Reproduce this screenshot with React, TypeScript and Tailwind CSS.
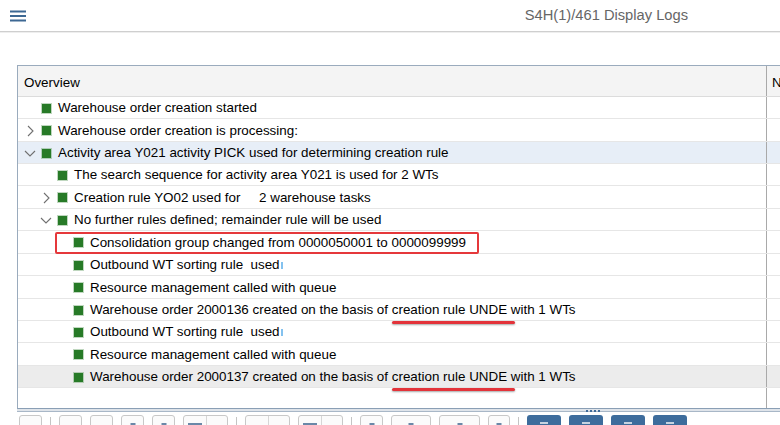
type Row = {
  level: number
  toggle?: 'open' | 'closed'
  text: string
  h: string
  bg?: string
  boxed?: boolean
  mark?: boolean
  underline?: [string, string, string]
}

const rows: Row[] = [
  { level: 0, text: 'Warehouse order creation started', h: 'h-[22px]' },
  { level: 0, toggle: 'closed', text: 'Warehouse order creation is processing:', h: 'h-[23px]' },
  {
    level: 0,
    toggle: 'open',
    text: 'Activity area Y021 activity PICK used for determining creation rule',
    h: 'h-[22px]',
    bg: 'bg-[#e7eef7]',
  },
  { level: 1, text: 'The search sequence for activity area Y021 is used for 2 WTs', h: 'h-[22px]' },
  { level: 1, toggle: 'closed', text: 'Creation rule YO02 used for     2 warehouse tasks', h: 'h-[23px]' },
  { level: 1, toggle: 'open', text: 'No further rules defined; remainder rule will be used', h: 'h-[22px]' },
  {
    level: 2,
    text: 'Consolidation group changed from 0000050001 to 0000099999',
    h: 'h-[23px]',
    boxed: true,
  },
  { level: 2, text: 'Outbound WT sorting rule  used', h: 'h-[22px]', mark: true },
  { level: 2, text: 'Resource management called with queue', h: 'h-[23px]' },
  {
    level: 2,
    text: '',
    h: 'h-[22px]',
    underline: ['Warehouse order 2000136 created on the basis of ', 'creation rule UNDE', ' with 1 WTs'],
  },
  { level: 2, text: 'Outbound WT sorting rule  used', h: 'h-[22px]', mark: true },
  { level: 2, text: 'Resource management called with queue', h: 'h-[23px]' },
  {
    level: 2,
    text: '',
    h: 'h-[22px]',
    bg: 'bg-[#ececec]',
    underline: ['Warehouse order 2000137 created on the basis of ', 'creation rule UNDE', ' with 1 WTs'],
  },
]

type Tool =
  | { kind: 'sep' }
  | { kind: 'btn'; w: string; split?: boolean; icon?: boolean }
  | { kind: 'blue' }

const tools: Tool[] = [
  { kind: 'btn', w: 'w-[23px]' },
  { kind: 'sep' },
  { kind: 'btn', w: 'w-[23px]' },
  { kind: 'btn', w: 'w-[23px]' },
  { kind: 'btn', w: 'w-[23px]', icon: true },
  { kind: 'btn', w: 'w-[23px]', icon: true },
  { kind: 'btn', w: 'w-[45px]', split: true, icon: true },
  { kind: 'sep' },
  { kind: 'btn', w: 'w-[45px]', split: true },
  { kind: 'btn', w: 'w-[45px]', split: true, icon: true },
  { kind: 'sep' },
  { kind: 'btn', w: 'w-[23px]', icon: true },
  { kind: 'btn', w: 'w-[40px]', icon: true },
  { kind: 'btn', w: 'w-[41px]', icon: true },
  { kind: 'btn', w: 'w-[22px]', icon: true },
  { kind: 'sep' },
  { kind: 'blue' },
  { kind: 'blue' },
  { kind: 'blue' },
  { kind: 'blue' },
]

function Toggle({ state }: { state?: 'open' | 'closed' }) {
  if (state === 'closed') {
    return (
      <svg width="7" height="12" viewBox="0 0 7 12">
        <polyline points="1,1 6,6 1,11" fill="none" stroke="#707070" strokeWidth="1.1" />
      </svg>
    )
  }
  if (state === 'open') {
    return (
      <svg width="12" height="7" viewBox="0 0 12 7">
        <polyline points="1,1 6,6 11,1" fill="none" stroke="#707070" strokeWidth="1.1" />
      </svg>
    )
  }
  return null
}

function LogRow({ row }: { row: Row }) {
  return (
    <div className={`flex ${row.h} ${row.bg ?? 'bg-white'} border-b border-[#e6e6e6]`}>
      <div className="relative flex w-[749px] shrink-0 items-center border-r border-[#a9a9a9]">
        {row.level > 0 && <div className={row.level === 1 ? 'w-[16px]' : 'w-[32px]'} />}
        <div className="flex w-[24px] items-center justify-center pt-[1px]">
          <Toggle state={row.toggle} />
        </div>
        <div className="mt-[1px] h-[9px] w-[9px] bg-[#277a27] ring-1 ring-[#5e9c5e]/40" />
        <span className="ml-[7px] whitespace-pre pt-[2px] text-[13.4px] text-black">
          {row.underline ? (
            <>
              {row.underline[0]}
              <span className="relative inline-block">
                {row.underline[1]}
                <span className="absolute bottom-[-3px] left-0 right-[-8px] h-[3px] rounded-full bg-[#e3333a] shadow-[0_1px_2px_rgba(0,0,0,0.35)]" />
              </span>
              {row.underline[2]}
            </>
          ) : (
            row.text
          )}
          {row.mark && <span className="ml-[1px] inline-block h-[7px] w-[2px] bg-[#84c2ef]" />}
        </span>
        {row.boxed && (
          <div className="absolute left-[37px] top-[1px] h-[22px] w-[424px] rounded-[2px] border-2 border-[#e5383b]" />
        )}
      </div>
      <div className="flex-1" />
    </div>
  )
}

function ToolButton({ tool }: { tool: Tool }) {
  if (tool.kind === 'sep') {
    return <div className="mt-[2px] h-[10px] w-px bg-[#c4c4c4]" />
  }
  if (tool.kind === 'blue') {
    return (
      <div className="relative h-[24px] w-[34px] rounded-[3px] bg-[#3d6c9c]">
        <div className="absolute left-[13px] top-[7px] h-[2px] w-[8px] bg-white/70" />
      </div>
    )
  }
  return (
    <div className={`relative flex h-[24px] ${tool.w} rounded-[3px] border border-[#c8c8c8] bg-[#fbfbfb]`}>
      {tool.split && <div className="absolute left-1/2 top-0 h-full w-px bg-[#d6d6d6]" />}
      {tool.icon && (
        <div
          className={`absolute top-[7px] h-[2px] bg-[#6a88a8] ${
            tool.split ? 'left-[4px] w-[14px]' : 'left-1/2 w-[5px] -translate-x-1/2'
          }`}
        />
      )}
    </div>
  )
}

export default function App() {
  return (
    <div className="h-[425px] w-[780px] overflow-hidden bg-white font-['Liberation_Sans',Arial,sans-serif]">
      {/* Shell bar */}
      <div className="flex h-[32px] items-center border-b border-[#cfcfcf]">
        <svg className="ml-[10px]" width="16" height="12" viewBox="0 0 16 12">
          <rect x="0" y="0.5" width="16" height="2" fill="#3d6893" />
          <rect x="0" y="5" width="16" height="2" fill="#3d6893" />
          <rect x="0" y="9.5" width="16" height="2" fill="#3d6893" />
        </svg>
        <span className="ml-auto mr-[92px] text-[14.7px] text-[#666]">S4H(1)/461 Display Logs</span>
      </div>
      <div className="h-px bg-[#eeeeee]" />

      <div className="ml-[17px] mt-[32px]">
        {/* Log tree */}
        <div className="border-b border-l border-t border-[#9aabbd] border-b-[#8a9fb5]">
          <div className="flex h-[31px] border-b border-[#dcdcdc] bg-[#f4f4f4]">
            <div className="flex w-[749px] shrink-0 items-center border-r border-[#a9a9a9] pl-[6px] pt-[5px] text-[13.4px] text-black">
              Overview
            </div>
            <div className="flex flex-1 items-center pl-[5px] pt-[5px] text-[13.4px] text-black">N</div>
          </div>
          {rows.map((row, i) => (
            <LogRow key={i} row={row} />
          ))}
          <div className="flex h-[20px]">
            <div className="w-[749px] shrink-0 border-r border-[#a9a9a9]" />
          </div>
        </div>

        {/* Splitter */}
        <div className="relative h-[3px] border-b border-[#a8b7c7] bg-[#dfe4ea]">
          <div className="absolute left-[569px] top-[1px] flex gap-[2px]">
            <div className="h-[2px] w-[2px] bg-[#3f6a99]" />
            <div className="h-[2px] w-[2px] bg-[#3f6a99]" />
            <div className="h-[2px] w-[2px] bg-[#3f6a99]" />
            <div className="h-[2px] w-[2px] bg-[#3f6a99]" />
          </div>
        </div>

        {/* Toolbar */}
        <div className="ml-[2px] mt-[3px] flex items-start gap-[8px]">
          {tools.map((tool, i) => (
            <ToolButton key={i} tool={tool} />
          ))}
        </div>
      </div>
    </div>
  )
}
